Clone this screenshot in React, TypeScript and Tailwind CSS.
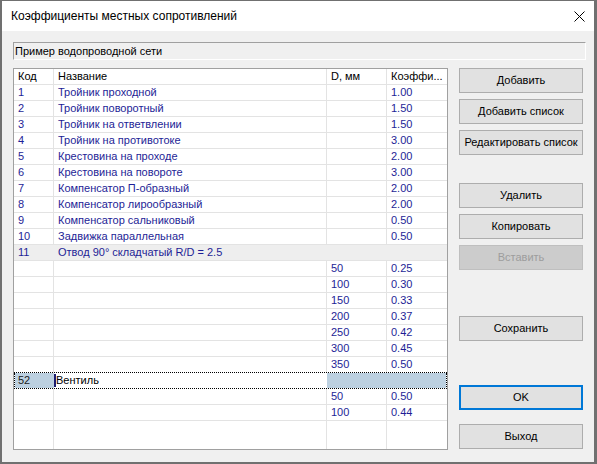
import React from "react";

const BLUE = "text-[#1e1e96]";

type Item = { code?: string; name?: string; d?: string; k?: string };

const top: Item[] = [
  { code: "1", name: "Тройник проходной", k: "1.00" },
  { code: "2", name: "Тройник поворотный", k: "1.50" },
  { code: "3", name: "Тройник на ответвлении", k: "1.50" },
  { code: "4", name: "Тройник на противотоке", k: "3.00" },
  { code: "5", name: "Крестовина на проходе", k: "2.00" },
  { code: "6", name: "Крестовина на повороте", k: "3.00" },
  { code: "7", name: "Компенсатор П-образный", k: "2.00" },
  { code: "8", name: "Компенсатор лирообразный", k: "2.00" },
  { code: "9", name: "Компенсатор сальниковый", k: "0.50" },
  { code: "10", name: "Задвижка параллельная", k: "0.50" },
];

const sub11: Item[] = [
  { d: "50", k: "0.25" },
  { d: "100", k: "0.30" },
  { d: "150", k: "0.33" },
  { d: "200", k: "0.37" },
  { d: "250", k: "0.42" },
  { d: "300", k: "0.45" },
  { d: "350", k: "0.50" },
];

const sub52: Item[] = [
  { d: "50", k: "0.50" },
  { d: "100", k: "0.44" },
];

function Row({ it, last }: { it: Item; last?: boolean }) {
  return (
    <div
      className={`flex h-[16px] shrink-0 border-b ${
        last ? "border-dotted border-black" : "border-[#e3e3e3]"
      } ${BLUE}`}
    >
      <div className="w-[40px] border-r border-[#e3e3e3] pl-[4px] flex items-center">{it.code}</div>
      <div className="w-[273px] border-r border-[#e3e3e3] pl-[4px] flex items-center whitespace-nowrap">{it.name}</div>
      <div className="w-[60px] border-r border-[#e3e3e3] pl-[4px] flex items-center">{it.d}</div>
      <div className="flex-1 pl-[4px] flex items-center">{it.k}</div>
    </div>
  );
}

function Btn({ children, cls = "", disabled, primary }: { children: React.ReactNode; cls?: string; disabled?: boolean; primary?: boolean }) {
  return (
    <div
      className={`h-[25px] w-[124px] shrink-0 flex items-center justify-center ${
        disabled
          ? "bg-[#cccccc] border border-[#bfbfbf] text-[#9d9d9d]"
          : primary
          ? "bg-[#e1e1e1] border-2 border-[#0078d7] text-black"
          : "bg-[#e1e1e1] border border-[#adadad] text-black"
      } ${cls}`}
    >
      {children}
    </div>
  );
}

export default function App() {
  return (
    <div className="w-[597px] h-[464px] bg-[#f0f0f0] border-t border-l-2 border-r-[3px] border-b-2 border-[#707070] flex flex-col font-['Liberation_Sans',Arial,sans-serif] text-[11px] leading-none overflow-hidden">
      {/* Title bar */}
      <div className="h-[30px] bg-white flex items-center justify-between pl-[9px] pr-[9px] shrink-0">
        <span className="text-[12px] text-black">Коэффициенты местных сопротивлений</span>
        <svg width="11" height="11" viewBox="0 0 11 11" className="mt-[1px]">
          <path d="M0.5 0.5 L10.5 10.5 M10.5 0.5 L0.5 10.5" stroke="#000" strokeWidth="1" />
        </svg>
      </div>

      {/* Body */}
      <div className="flex flex-col pl-[11px] pt-[11px]">
        <div className="w-[573px] h-[18px] border-t border-l border-[#a0a0a0] border-r-white border-b-white border-r border-b flex items-center pl-[1px] text-black">
          Пример водопроводной сети
        </div>

        <div className="flex mt-[8px]">
          {/* Grid */}
          <div className="w-[435px] h-[382px] border border-[#a0a0a0] bg-white flex flex-col">
            {/* Header */}
            <div className="flex h-[16px] shrink-0 border-b border-[#e3e3e3] text-black">
              <div className="w-[40px] border-r border-[#e3e3e3] pl-[4px] flex items-center">Код</div>
              <div className="w-[273px] border-r border-[#e3e3e3] pl-[4px] flex items-center">Название</div>
              <div className="w-[60px] border-r border-[#e3e3e3] pl-[4px] flex items-center">D, мм</div>
              <div className="flex-1 pl-[4px] flex items-center">Коэффи...</div>
            </div>
            {top.map((it) => (
              <Row key={it.code} it={it} />
            ))}
            {/* Group row 11 */}
            <div className={`flex h-[16px] shrink-0 border-b border-[#e3e3e3] bg-[#eeeeee] ${BLUE}`}>
              <div className="w-[40px] pl-[4px] flex items-center">11</div>
              <div className="flex-1 pl-[4px] flex items-center whitespace-nowrap">Отвод 90° складчатый R/D = 2.5</div>
            </div>
            {sub11.map((it, i) => (
              <Row key={"a" + i} it={it} last={i === sub11.length - 1} />
            ))}
            {/* Selected row */}
            <div className="flex h-[16px] shrink-0 border-x border-b border-dotted border-black text-black">
              <div className="w-[39px] bg-[#bcd0e0] pl-[3px] flex items-center text-[#1a1a1a]">52</div>
              <div className="w-[273px] flex items-center">
                <div className="w-[2px] h-[13px] bg-[#1c1c70]" />
                <span>Вентиль</span>
              </div>
              <div className="flex-1 bg-[#bcd0e0]" />
            </div>
            {sub52.map((it, i) => (
              <Row key={"b" + i} it={it} />
            ))}
            {/* Empty filler */}
            <div className="flex flex-1">
              <div className="w-[40px] border-r border-[#e3e3e3]" />
              <div className="w-[273px] border-r border-[#e3e3e3]" />
              <div className="w-[60px] border-r border-[#e3e3e3]" />
              <div className="flex-1" />
            </div>
          </div>

          {/* Buttons */}
          <div className="flex flex-col ml-[11px]">
            <Btn>Добавить</Btn>
            <Btn cls="mt-[6px]">Добавить список</Btn>
            <Btn cls="mt-[6px]">Редактировать список</Btn>
            <Btn cls="mt-[28px]">Удалить</Btn>
            <Btn cls="mt-[6px]">Копировать</Btn>
            <Btn cls="mt-[6px]" disabled>Вставить</Btn>
            <Btn cls="mt-[46px]">Сохранить</Btn>
            <Btn cls="mt-[44px]" primary>OK</Btn>
            <Btn cls="mt-[14px]">Выход</Btn>
          </div>
        </div>
      </div>
    </div>
  );
}
